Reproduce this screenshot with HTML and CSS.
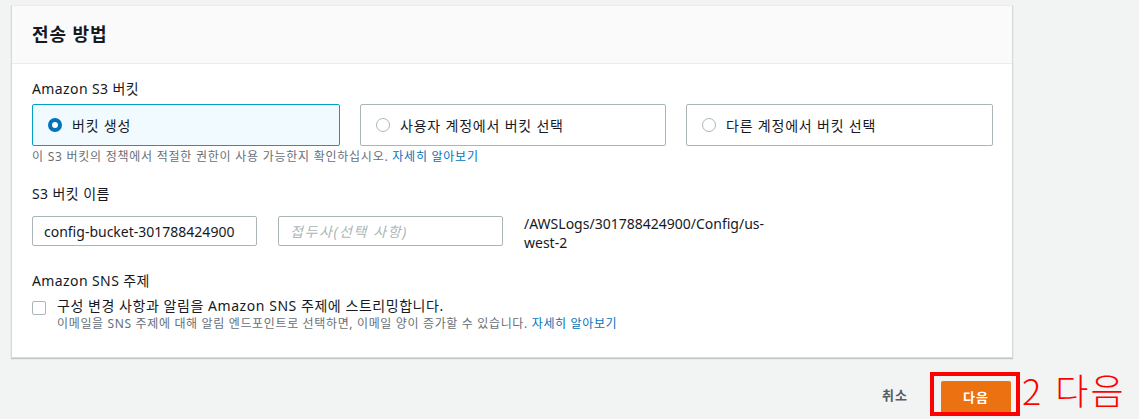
FILE: index.html
```html
<!DOCTYPE html>
<html lang="ko">
<head>
<meta charset="utf-8">
<title>전송 방법</title>
<link rel="stylesheet" href="styles.css">
</head>
<body>
<div class="page">
  <section class="card">
    <header class="card-header"><h2>전송 방법</h2></header>
    <div class="card-body">
      <div class="field">
        <div class="label">Amazon S3 버킷</div>
        <div class="tiles">
          <label class="tile selected"><span class="radio on"></span><span>버킷 생성</span></label>
          <label class="tile"><span class="radio"></span><span>사용자 계정에서 버킷 선택</span></label>
          <label class="tile"><span class="radio"></span><span>다른 계정에서 버킷 선택</span></label>
        </div>
        <div class="hint">이 S3 버킷의 정책에서 적절한 권한이 사용 가능한지 확인하십시오. <a class="link">자세히 알아보기</a></div>
      </div>
      <div class="field">
        <div class="label">S3 버킷 이름</div>
        <div class="bucket-row">
          <div class="input">config-bucket-301788424900</div>
          <div class="input placeholder">접두사(선택 사항)</div>
          <div class="path">/AWSLogs/301788424900/Config/us-west-2</div>
        </div>
      </div>
      <div class="field last">
        <div class="label">Amazon SNS 주제</div>
        <div class="check-row">
          <span class="checkbox"></span>
          <div>
            <div class="check-text">구성 변경 사항과 알림을 Amazon SNS 주제에 스트리밍합니다.</div>
            <div class="check-hint">이메일을 SNS 주제에 대해 알림 엔드포인트로 선택하면, 이메일 양이 증가할 수 있습니다. <a class="link">자세히 알아보기</a></div>
          </div>
        </div>
      </div>
    </div>
  </section>
  <div class="footer">
    <span class="cancel">취소</span>
    <div class="highlight"><span class="primary">다음</span></div>
    <span class="annotation">2 다음</span>
  </div>
</div>
</body>
</html>
```

FILE: styles.css
```css
* { box-sizing: border-box; }
html, body { margin: 0; padding: 0; }
body {
  background: #f2f3f3;
  font-family: "Noto Sans", "Noto Sans CJK KR", sans-serif;
  font-size: 14px;
  color: #16191f;
  width: 1139px;
  height: 419px;
  overflow: hidden;
}
.page { padding: 5px 0 0 11px; }
.card {
  width: 1002px;
  background: #fff;
  border: 1px solid #d5dbdb;
  border-top-color: #eaeded;
  box-shadow: 0 1px 1px rgba(0,28,36,0.2);
}
.card-header {
  background: #fafafa;
  border-bottom: 1px solid #eaeded;
  height: 58px;
  padding: 0 20px;
  display: flex;
  align-items: center;
}
.card-header h2 {
  margin: 0;
  font-size: 18px;
  font-weight: 700;
  line-height: 22px;
  padding-bottom: 2px;
  letter-spacing: 0.9px;
}
.card-body { padding: 16px 20px 25px 20px; }
.label { font-size: 14px; line-height: 18px; margin-bottom: 6px; letter-spacing: 0.4px; }
.field { margin-bottom: 20px; }
.field.last { margin-bottom: 0; }
.tiles {
  display: grid;
  grid-template-columns: 308px 306px 307px;
  column-gap: 20px;
  margin-top: 2px;
}
.tile {
  height: 42px;
  border: 1px solid #aab7b8;
  border-radius: 2px;
  display: flex;
  align-items: center;
  padding-left: 15px;
  gap: 10px;
  font-size: 14px;
  letter-spacing: 0.8px;
}
.tile.selected { border-color: #00a1c9; background: #f1faff; }
.radio {
  width: 14px; height: 14px;
  border-radius: 50%;
  border: 1px solid #aab7b8;
  background: #fff;
  flex: none;
}
.radio.on { border: 4px solid #0073bb; }
.hint { font-size: 12px; line-height: 16px; color: #687078; margin-top: 3px; letter-spacing: 0.75px; }
.link { color: #0073bb; }
.bucket-row { display: flex; gap: 21px; align-items: flex-start; margin-top: 13px; }
.input {
  width: 225px; height: 30px;
  border: 1px solid #aab7b8;
  border-radius: 2px;
  padding: 0 11px;
  display: flex; align-items: center;
  font-size: 14px;
}
.input.placeholder { color: #aab7b8; font-style: italic; letter-spacing: 1.6px; }
.path { width: 260px; font-size: 14px; line-height: 19px; margin-top: -2px; }
.check-row { display: flex; gap: 11px; margin-top: 1px; }
.checkbox {
  width: 14px; height: 14px;
  border: 1px solid #aab7b8;
  border-radius: 2px;
  margin-top: 5px;
  flex: none;
}
.check-text { font-size: 14px; line-height: 20px; letter-spacing: 0.55px; }
.check-hint { font-size: 12px; line-height: 16px; color: #687078; letter-spacing: 0.65px; }
.footer {
  position: relative;
  width: 1009px;
  margin-top: 14px;
  display: flex;
  justify-content: flex-end;
  align-items: flex-start;
}
.cancel {
  font-size: 13px;
  font-weight: 700;
  color: #545b64;
  line-height: 18px;
  margin-top: 14px;
  margin-right: 22px;
  letter-spacing: 1px;
}
.highlight {
  border: 4px solid #ff0000;
  padding: 5px 5px 0 7px;
}
.primary {
  display: flex;
  align-items: center;
  justify-content: center;
  width: 70px;
  height: 31px;
  background: #ec7211;
  border-radius: 2px 2px 0 0;
  color: #fff;
  font-size: 13px;
  font-weight: 700;
  letter-spacing: 1px;
}
.annotation {
  position: absolute;
  left: 1011px;
  top: -7px;
  color: #ff0000;
  font-family: "Noto Sans CJK KR", sans-serif;
  font-weight: 300;
  font-size: 36px;
  line-height: 48px;
  letter-spacing: 2px;
  white-space: nowrap;
}
```
